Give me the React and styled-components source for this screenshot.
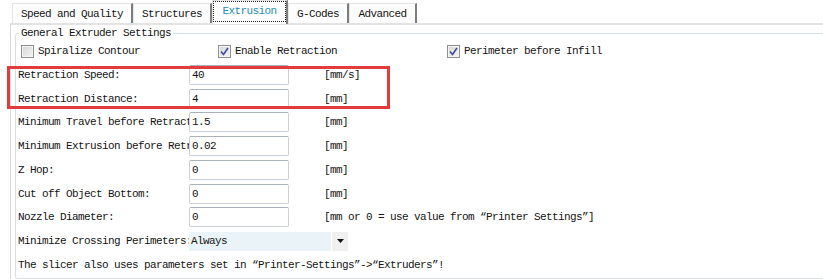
import React from "react";
import styled, { createGlobalStyle } from "styled-components";

const colours = {
  text: "#141414",
  border: "#d9d9d9",
  group: "#d5dfe5",
  tabShadow: "#7d7d7d",
  active: "#2690b0",
  red: "#e23b3b",
  inputBorder: "#c9d0d8",
  selectBg: "#eaf4f8",
};

const GlobalStyle = createGlobalStyle`
  html, body {
    margin: 0;
    padding: 0;
    background: #fff;
    overflow: hidden;
  }
  body {
    font-family: "Liberation Mono", "DejaVu Sans Mono", monospace;
    font-size: 11px;
    letter-spacing: -0.6px;
    color: ${colours.text};
  }
`;

const Page = styled.div`
  width: 860px;
  height: 279px;
`;

const TabBar = styled.div`
  display: flex;
  align-items: flex-end;
  height: 23px;
  padding-left: 12px;
`;

const Tab = styled.div`
  box-sizing: border-box;
  width: ${(p) => p.$w}px;
  height: ${(p) => (p.$active ? 24 : 20)}px;
  margin-bottom: ${(p) => (p.$active ? -1 : 0)}px;
  display: flex;
  align-items: center;
  justify-content: center;
  background: ${(p) => (p.$active ? "#fff" : "#fdfdfd")};
  border-top: 1px solid #e2e2e2;
  border-left: 1px solid #e6e6e6;
  border-right: 2px solid ${colours.tabShadow};
  color: ${(p) => (p.$active ? colours.active : colours.text)};
  position: relative;
  z-index: ${(p) => (p.$active ? 1 : 0)};
  padding-bottom: ${(p) => (p.$active ? 3 : 0)}px;
`;

const Focus = styled.span`
  box-sizing: border-box;
  display: flex;
  align-items: center;
  justify-content: center;
  width: calc(100% - 2px);
  height: 19px;
  margin-top: 1px;
  padding-bottom: 1px;
  outline: 1px dotted #222;
`;

const Panel = styled.div`
  margin-left: 10px;
  border-top: 2px solid #e3e3e3;
  border-left: 1px solid ${colours.border};
  padding-left: 4px;
  height: 260px;
`;

const Group = styled.fieldset`
  margin: 2px 0 0 0;
  padding: 0;
  border: 1px solid ${colours.group};
  border-radius: 3px;
  min-height: 250px;
`;

const Legend = styled.legend`
  margin-left: 3px;
  padding: 0 2px;
  line-height: 12px;
`;

const CheckRow = styled.div`
  display: grid;
  grid-template-columns: 197px 229px 1fr;
  align-items: center;
  height: 24px;
  padding-left: 5px;
`;

const CheckItem = styled.label`
  display: flex;
  align-items: center;
  gap: 4px;
  white-space: nowrap;
`;

const Box = styled.span`
  box-sizing: border-box;
  width: 13px;
  height: 13px;
  border: 1px solid #8e8f8f;
  background: linear-gradient(135deg, #d6d6d6 0%, #f4f4f4 100%);
  box-shadow: inset 0 0 0 1px #f4f4f4;
  display: flex;
  align-items: center;
  justify-content: center;
`;

const Highlight = styled.div`
  position: relative;
  &::after {
    content: "";
    position: absolute;
    left: -9px;
    top: 3px;
    width: 383px;
    height: 43px;
    box-sizing: border-box;
    border: 3px solid ${colours.red};
    pointer-events: none;
  }
`;

const Row = styled.div`
  display: flex;
  align-items: center;
  height: 23.75px;
  padding-left: 2px;
`;

const Label = styled.span`
  width: 171px;
  flex-shrink: 0;
  overflow: ${(p) => (p.$spill ? "visible" : "hidden")};
  white-space: nowrap;
`;

const Input = styled.div`
  box-sizing: border-box;
  width: 100px;
  height: 20px;
  border: 1px solid ${colours.inputBorder};
  border-top-color: #abb1b8;
  border-radius: 2px;
  padding-left: 2px;
  display: flex;
  align-items: center;
  background: #fff;
`;

const Unit = styled.span`
  margin-left: 35px;
  white-space: nowrap;
`;

const Select = styled.div`
  display: flex;
  width: 159px;
  height: 19px;
`;

const SelectValue = styled.div`
  flex: 1;
  background: ${colours.selectBg};
  display: flex;
  align-items: center;
  padding-left: 2px;
`;

const SelectButton = styled.div`
  width: 16px;
  margin-left: 1px;
  background: #f0f0f0;
  display: flex;
  align-items: center;
  justify-content: center;
`;

const Note = styled(Row)`
  white-space: nowrap;
`;

const Check = ({ checked }) => (
  <Box>
    {checked && (
      <svg width="9" height="9" viewBox="0 0 9 9">
        <path d="M1 4.5 L3.5 7.5 L8 1" fill="none" stroke="#3d4c9c" strokeWidth="1.6" />
      </svg>
    )}
  </Box>
);

const Param = ({ label, value, unit }) => (
  <Row>
    <Label>{label}</Label>
    <Input>{value}</Input>
    <Unit>{unit}</Unit>
  </Row>
);

const tabs = [
  { name: "Speed and Quality", w: 121 },
  { name: "Structures", w: 79 },
  { name: "Extrusion", w: 76, active: true },
  { name: "G-Codes", w: 61 },
  { name: "Advanced", w: 68 },
];

const params = [
  { label: "Minimum Travel before Retraction:", value: "1.5", unit: "[mm]" },
  { label: "Minimum Extrusion before Retraction:", value: "0.02", unit: "[mm]" },
  { label: "Z Hop:", value: "0", unit: "[mm]" },
  { label: "Cut off Object Bottom:", value: "0", unit: "[mm]" },
  {
    label: "Nozzle Diameter:",
    value: "0",
    unit: "[mm or 0 = use value from \u201cPrinter Settings\u201d]",
  },
];

export default function App() {
  return (
    <Page>
      <GlobalStyle />
      <TabBar>
        {tabs.map((t) => (
          <Tab key={t.name} $w={t.w} $active={t.active}>
            {t.active ? <Focus>{t.name}</Focus> : t.name}
          </Tab>
        ))}
      </TabBar>
      <Panel>
        <Group>
          <Legend>General Extruder Settings</Legend>
          <CheckRow>
            <CheckItem>
              <Check />
              Spiralize Contour
            </CheckItem>
            <CheckItem>
              <Check checked />
              Enable Retraction
            </CheckItem>
            <CheckItem>
              <Check checked />
              Perimeter before Infill
            </CheckItem>
          </CheckRow>
          <Highlight>
            <Param label="Retraction Speed:" value="40" unit="[mm/s]" />
            <Param label="Retraction Distance:" value="4" unit="[mm]" />
          </Highlight>
          {params.map((p) => (
            <Param key={p.label} {...p} />
          ))}
          <Row>
            <Label $spill>Minimize Crossing Perimeters:</Label>
            <Select>
              <SelectValue>Always</SelectValue>
              <SelectButton>
                <svg width="7" height="4" viewBox="0 0 7 4">
                  <path d="M0 0 H7 L3.5 4 Z" fill="#111" />
                </svg>
              </SelectButton>
            </Select>
          </Row>
          <Note>
            The slicer also uses parameters set in {"\u201cPrinter-Settings\u201d->\u201cExtruders\u201d!"}
          </Note>
        </Group>
      </Panel>
    </Page>
  );
}
